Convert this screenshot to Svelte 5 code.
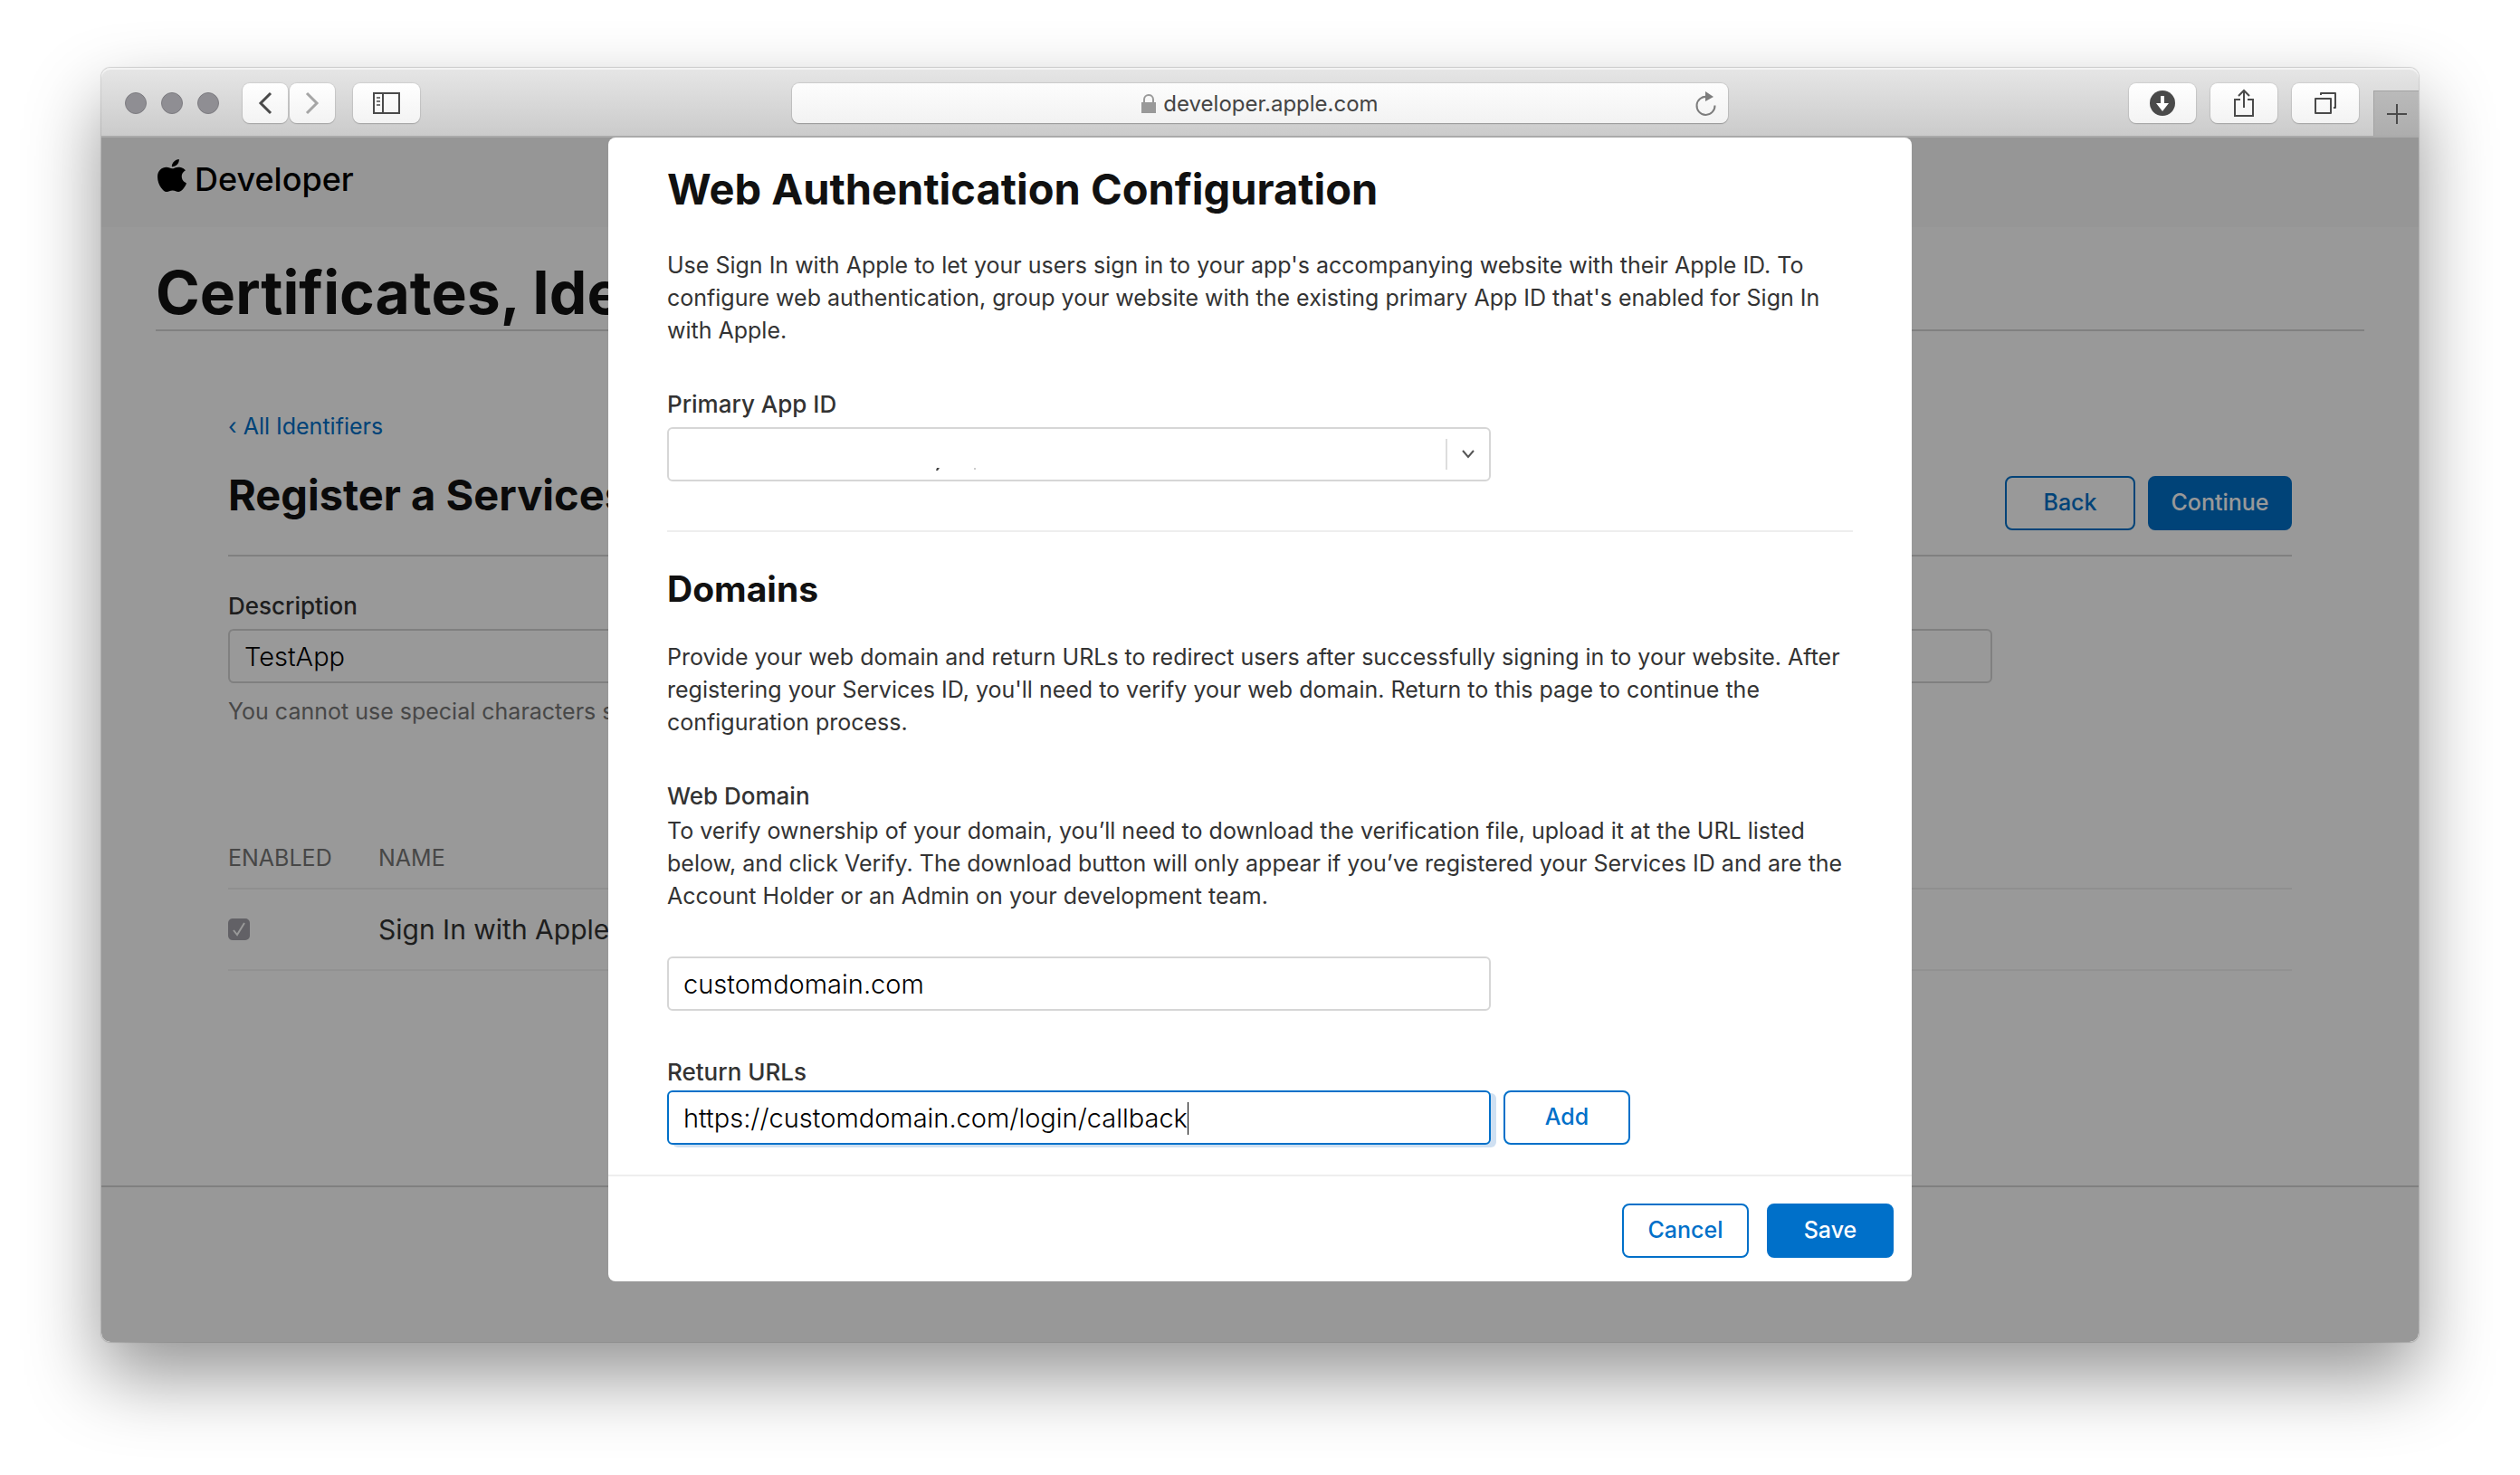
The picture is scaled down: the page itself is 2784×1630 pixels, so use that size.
<script>
  let description = $state('TestApp');
  let domain = $state('customdomain.com');
  let returnUrl = $state('https://customdomain.com/login/callback');
  let enabled = $state(true);
</script>

<div class="desktop">
  <div class="window">
    <header class="toolbar">
      <div class="side">
        <div class="lights"><i></i><i></i><i></i></div>
        <div class="nav">
          <button class="tool narrow" aria-label="Back">
            <svg width="16" height="26" viewBox="0 0 16 26"><path d="M14 2 3 13l11 11" fill="none" stroke="#4a4a4a" stroke-width="3" /></svg>
          </button>
          <button class="tool narrow" aria-label="Forward">
            <svg width="16" height="26" viewBox="0 0 16 26"><path d="m2 2 11 11L2 24" fill="none" stroke="#a6a6a6" stroke-width="3" /></svg>
          </button>
        </div>
        <button class="tool" aria-label="Sidebar">
          <svg width="30" height="24" viewBox="0 0 30 24"><path d="M1 1h28v22H1zM11 1v22" fill="none" stroke="#4a4a4a" stroke-width="2" /><path d="M4 6h4M4 10h4M4 14h4" stroke="#4a4a4a" stroke-width="1.5" /></svg>
        </button>
      </div>
      <div class="address">
        <span class="site">
          <svg width="16" height="22" viewBox="0 0 16 22"><path d="M0 9h16v12H0z" fill="#999" /><path d="M3 10V6a5 5 0 0 1 10 0v4" fill="none" stroke="#999" stroke-width="2" /></svg>
          developer.apple.com
        </span>
        <button class="reload" aria-label="Reload">
          <svg width="24" height="28" viewBox="0 0 24 28"><path d="M21.500 15.500A10 10 0 1 1 13 6" fill="none" stroke="#7d7d7d" stroke-width="2" /><path d="m11 0 9 6-9 5z" fill="#7d7d7d" /></svg>
        </button>
      </div>
      <div class="side end">
        <button class="tool" aria-label="Downloads">
          <svg width="28" height="28" viewBox="0 0 28 28"><circle cx="14" cy="14" r="14" fill="#4a4a4a" /><path d="M12 6h4v8h5l-7 9-7-9h5z" fill="#fff" /></svg>
        </button>
        <button class="tool" aria-label="Share">
          <svg width="24" height="32" viewBox="0 0 24 32"><path d="M8 12H2v18h20V12h-6M12 21V2M6 8l6-6 6 6" fill="none" stroke="#4a4a4a" stroke-width="2" /></svg>
        </button>
        <button class="tool" aria-label="Tabs">
          <svg width="26" height="26" viewBox="0 0 26 26"><path d="M2 8h17v16H2z" fill="none" stroke="#4a4a4a" stroke-width="2" stroke-linejoin="round" /><path d="M8 4V2h16v16h-2" fill="none" stroke="#4a4a4a" stroke-width="2" stroke-linejoin="round" /></svg>
        </button>
        <button class="newtab" aria-label="New tab">
          <svg width="22" height="22" viewBox="0 0 22 22"><path d="M11 0v22M0 11h22" stroke="#4a4a4a" stroke-width="2" /></svg>
        </button>
      </div>
    </header>

    <div class="viewport">
      <div class="page">
        <div class="brand">
          <svg width="32" height="36" viewBox="0 0 814 1000" preserveAspectRatio="none"><path d="M788 341c-6 4-108 62-108 190 0 149 130 201 134 202-1 3-21 72-69 142-43 62-88 124-156 124s-86-40-165-40c-77 0-104 41-167 41s-106-57-156-127C43 790 0 663 0 542c0-194 126-297 250-297 66 0 121 43 163 43 39 0 101-46 176-46 29 0 131 3 199 99zM554 159c31-37 53-88 53-139 0-7-1-14-2-20-50 2-111 34-147 76-28 32-55 83-55 135 0 8 1 16 2 18 3 1 8 1 13 1 46 0 103-30 136-71z" /></svg>
          <span>Developer</span>
        </div>
        <div class="masthead"><h1>Certificates, Identifiers &amp; Profiles</h1></div>
        <main>
          <a class="crumb" href="#identifiers">‹ All Identifiers</a>
          <div class="heading">
            <h2>Register a Services ID</h2>
            <div class="pair">
              <button class="btn back">Back</button>
              <button class="btn solid wide">Continue</button>
            </div>
          </div>
          <label class="name" for="description">Description</label>
          <div class="field description"><input id="description" bind:value={description} /></div>
          <p class="hint">You cannot use special characters such as @, &amp;, *, "</p>
          <table>
            <thead><tr><th class="tick">ENABLED</th><th>NAME</th></tr></thead>
            <tbody>
              <tr>
                <td>
                  <span class="check">
                    <input id="signin" type="checkbox" bind:checked={enabled} />
                    <svg width="24" height="24" viewBox="0 0 24 24"><path d="m6 13 4 5 8-13" fill="none" stroke="#fff" stroke-width="2" /></svg>
                  </span>
                </td>
                <td><label for="signin">Sign In with Apple</label></td>
              </tr>
            </tbody>
          </table>
        </main>
        <footer></footer>
      </div>

      <div class="scrim">
        <div class="sheet" role="dialog" aria-modal="true" aria-labelledby="sheet-title">
          <div class="body">
            <h2 id="sheet-title">Web Authentication Configuration</h2>
            <p class="intro">
              Use Sign In with Apple to let your users sign in to your app's accompanying website with their Apple ID. To
              configure web authentication, group your website with the existing primary App ID that's enabled for Sign In
              with Apple.
            </p>
            <label class="name" for="appid">Primary App ID</label>
            <div class="select">
              <select id="appid"><option></option></select>
              <svg class="residue" width="48" height="6" viewBox="0 0 48 6"><path d="M2 3h3L3 6H1z" fill="#444" /><path d="M43 3h2v2h-2z" fill="#ccc" /></svg>
              <span class="arrow"><svg width="16" height="10" viewBox="0 0 16 10"><path d="m2 1 6 7 6-7" fill="none" stroke="#555" stroke-width="2" /></svg></span>
            </div>
            <hr />
            <h3>Domains</h3>
            <p class="intro">
              Provide your web domain and return URLs to redirect users after successfully signing in to your website. After
              registering your Services ID, you'll need to verify your web domain. Return to this page to continue the
              configuration process.
            </p>
            <label class="name tight" for="domain">Web Domain</label>
            <p class="intro">
              To verify ownership of your domain, you’ll need to download the verification file, upload it at the URL listed
              below, and click Verify. The download button will only appear if you’ve registered your Services ID and are the
              Account Holder or an Admin on your development team.
            </p>
            <div class="field domain"><input id="domain" bind:value={domain} /></div>
            <label class="name tight" for="return">Return URLs</label>
            <div class="urls">
              <div class="field active"><input id="return" bind:value={returnUrl} /><span class="caret"></span></div>
              <button class="btn">Add</button>
            </div>
          </div>
          <div class="bar">
            <button class="btn">Cancel</button>
            <button class="btn solid">Save</button>
          </div>
        </div>
      </div>
    </div>
  </div>
</div>

<style>
  :global(body) {
    background: #fff;
  }
  .desktop {
    box-sizing: border-box;
    min-height: 100vh;
    padding: 75px 112px 147px;
    overflow: hidden;
    font-family: Inter, 'Liberation Sans', sans-serif;
    font-size: 25px;
    line-height: 36px;
    color: #333;
  }
  .desktop * {
    box-sizing: border-box;
  }
  h1, h2, h3, p {
    margin: 0;
  }
  button, input, select {
    font: inherit;
    color: inherit;
    margin: 0;
    padding: 0;
    border: 0;
    background: none;
    outline: none;
  }
  svg {
    display: block;
  }
  .window {
    border-radius: 10px;
    box-shadow: 0 0 1px 1px rgba(0, 0, 0, 0.15), 0 38px 82px rgba(0, 0, 0, 0.42);
  }
  .toolbar {
    display: flex;
    height: 77px;
    padding-top: 17px;
    border-radius: 10px 10px 0 0;
    border-bottom: 2px solid #aaa;
    background: linear-gradient(#e6e6e6, #cbcbcb);
    box-shadow: inset 0 2px 0 #f3f3f3;
  }
  .side {
    display: flex;
    flex: 1 0 0;
    padding-left: 26px;
  }
  .end {
    justify-content: flex-end;
    gap: 16px;
  }
  .lights {
    display: flex;
    align-items: center;
    gap: 16px;
    width: 130px;
    height: 44px;
  }
  .lights i {
    width: 24px;
    height: 24px;
    border-radius: 50%;
    background: #8f8e93;
    border: 1px solid #7d7c81;
  }
  .nav {
    display: flex;
    gap: 2px;
    margin-right: 20px;
  }
  .tool {
    display: grid;
    place-items: center;
    width: 74px;
    height: 44px;
    border-radius: 8px;
    background: linear-gradient(#fff, #f3f3f3);
    box-shadow: 0 1px 1px #a6a6a6, 0 0 1px 1px rgba(0, 0, 0, 0.08);
  }
  .narrow {
    width: 50px;
  }
  .address {
    display: flex;
    align-items: center;
    flex: 0 1 1034px;
    height: 44px;
    padding: 2px 12px 0 36px;
    border-radius: 8px;
    background: linear-gradient(#fdfdfd, #f2f2f2);
    box-shadow: 0 1px 1px #999, 0 0 1px 1px rgba(0, 0, 0, 0.1);
  }
  .site {
    display: flex;
    align-items: center;
    justify-content: center;
    gap: 8px;
    flex: 1;
    font-size: 24px;
    color: #444;
  }
  .newtab {
    display: grid;
    place-items: center;
    align-self: flex-end;
    width: 50px;
    height: 50px;
    background: linear-gradient(#bababa, #adadad);
    border: solid #a3a3a3;
    border-width: 1px 0 0 1px;
  }
  .viewport {
    display: grid;
    overflow: hidden;
    border-radius: 0 0 10px 10px;
  }
  .page, .scrim {
    grid-area: 1 / 1;
    min-width: 0;
  }
  .page {
    display: flex;
    flex-direction: column;
    background: #fff;
  }
  .brand {
    display: flex;
    align-items: center;
    gap: 9px;
    height: 99px;
    padding: 0 62px 8px;
    background: #fafafa;
    color: #000;
    font-size: 36px;
    font-weight: 500;
  }
  .brand svg {
    margin-bottom: 8px;
  }
  .masthead {
    margin: 0 60px;
    padding-top: 31px;
    border-bottom: 2px solid #d6d6d6;
  }
  h1 {
    font-size: 66px;
    line-height: 82px;
    font-weight: 700;
    color: #111;
    white-space: nowrap;
  }
  h2 {
    font-size: 47px;
    line-height: 56px;
    font-weight: 700;
    color: #111;
  }
  h3 {
    font-size: 39px;
    line-height: 48px;
    font-weight: 700;
    color: #111;
    margin-bottom: 33px;
  }
  main {
    padding: 90px 140px 237px;
  }
  .crumb {
    display: block;
    line-height: 30px;
    color: #0070c9;
    text-decoration: none;
  }
  .heading {
    display: flex;
    align-items: baseline;
    justify-content: space-between;
    padding: 33px 0 27px;
    margin-bottom: 40px;
    border-bottom: 2px solid #d6d6d6;
  }
  .pair {
    display: flex;
    gap: 14px;
  }
  .btn {
    width: 140px;
    height: 60px;
    padding-bottom: 2px;
    border: 2px solid #0070c9;
    border-radius: 8px;
    color: #0070c9;
    font-weight: 500;
  }
  .back {
    width: 144px;
  }
  .wide {
    width: 159px;
  }
  .solid {
    background: #0070c9;
    color: #fff;
  }
  .name {
    display: block;
    font-size: 26px;
    line-height: 30px;
    font-weight: 500;
    margin-bottom: 10px;
  }
  .tight {
    margin-bottom: 5px;
  }
  .field {
    display: flex;
    align-items: center;
    height: 60px;
    padding: 2px 16px 0;
    border: 2px solid #d6d6d6;
    border-radius: 6px;
    background: #fff;
    color: #000;
    font-size: 29px;
    font-weight: 300;
  }
  .field input {
    width: 100%;
  }
  .description {
    width: 85.5%;
  }
  .hint {
    margin-top: 16px;
    line-height: 30px;
    color: #777;
  }
  table {
    width: 100%;
    margin-top: 132px;
    border-collapse: collapse;
  }
  th {
    padding: 0 0 18px;
    line-height: 30px;
    font-weight: 400;
    text-align: left;
    color: #777;
    border-bottom: 2px solid #eee;
  }
  .tick {
    width: 166px;
  }
  td {
    height: 90px;
    padding: 0;
    font-size: 30px;
    border-bottom: 2px solid #f2f2f2;
  }
  .check {
    display: grid;
    width: 24px;
    height: 24px;
  }
  .check input {
    appearance: none;
    grid-area: 1 / 1;
    border-radius: 5px;
    background: #a3a2aa;
  }
  .check svg {
    grid-area: 1 / 1;
    pointer-events: none;
    z-index: 1;
  }
  footer {
    flex: 1;
    min-height: 173px;
    border-top: 2px solid #d6d6d6;
    background: #fdfdfd;
  }
  .scrim {
    display: flex;
    justify-content: center;
    align-items: flex-start;
    background: rgba(0, 0, 0, 0.4);
    z-index: 2;
  }
  .sheet {
    width: 1440px;
    max-width: 100%;
    border-radius: 8px;
    background: #fff;
  }
  .body {
    padding: 29px 65px 33px;
  }
  .body h2 {
    margin-bottom: 38px;
  }
  .intro {
    margin-bottom: 49px;
  }
  .select {
    position: relative;
    max-width: 910px;
    height: 60px;
  }
  .select select {
    appearance: none;
    width: 100%;
    height: 100%;
    padding: 0 60px 0 17px;
    border: 2px solid #d6d6d6;
    border-radius: 6px;
    background: #fff;
  }
  .residue {
    position: absolute;
    left: 296px;
    bottom: 12px;
    pointer-events: none;
  }
  .arrow {
    position: absolute;
    top: 13px;
    right: 2px;
    display: grid;
    place-items: center;
    width: 48px;
    height: 34px;
    border-left: 2px solid #ddd;
    pointer-events: none;
  }
  hr {
    height: 2px;
    margin: 54px 0 39px;
    border: 0;
    background: #eee;
  }
  .domain {
    max-width: 910px;
    margin-bottom: 53px;
  }
  .urls {
    display: flex;
    gap: 14px;
  }
  .active {
    flex: 0 1 910px;
    border-color: #0070c9;
    box-shadow: 6px 3px 0 #cfe0f2;
  }
  .active input {
    width: auto;
    max-width: 100%;
    field-sizing: content;
  }
  .caret {
    width: 1px;
    height: 36px;
    background: #000;
  }
  .bar {
    display: flex;
    justify-content: flex-end;
    gap: 20px;
    padding: 30px 20px 26px;
    border-top: 2px solid #eee;
  }
</style>
